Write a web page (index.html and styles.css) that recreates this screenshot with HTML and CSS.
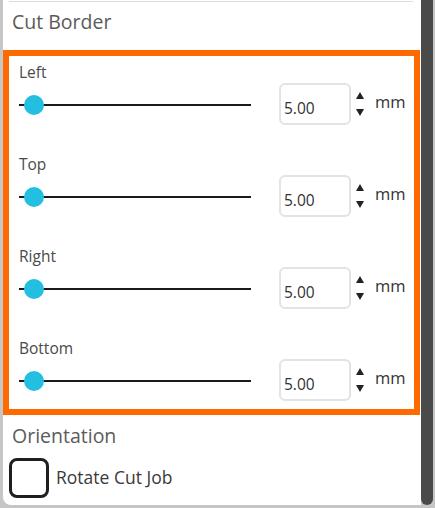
FILE: index.html
```html
<!DOCTYPE html>
<html>
<head>
<meta charset="utf-8">
<link rel="stylesheet" href="styles.css">
</head>
<body>
<div class="frame">
  <div class="panel">
    <div class="topline"></div>
    <div class="section-title">Cut Border</div>
    <div class="highlight">
      <div class="field">
        <div class="field-label">Left</div>
        <div class="controls">
          <div class="slider"><div class="track"></div><div class="thumb"></div></div>
          <div class="numbox">5.00</div>
          <div class="spin"><span class="up"></span><span class="down"></span></div>
          <div class="unit">mm</div>
        </div>
      </div>
      <div class="field">
        <div class="field-label">Top</div>
        <div class="controls">
          <div class="slider"><div class="track"></div><div class="thumb"></div></div>
          <div class="numbox">5.00</div>
          <div class="spin"><span class="up"></span><span class="down"></span></div>
          <div class="unit">mm</div>
        </div>
      </div>
      <div class="field">
        <div class="field-label">Right</div>
        <div class="controls">
          <div class="slider"><div class="track"></div><div class="thumb"></div></div>
          <div class="numbox">5.00</div>
          <div class="spin"><span class="up"></span><span class="down"></span></div>
          <div class="unit">mm</div>
        </div>
      </div>
      <div class="field">
        <div class="field-label">Bottom</div>
        <div class="controls">
          <div class="slider"><div class="track"></div><div class="thumb"></div></div>
          <div class="numbox">5.00</div>
          <div class="spin"><span class="up"></span><span class="down"></span></div>
          <div class="unit">mm</div>
        </div>
      </div>
    </div>
    <div class="section-title orient">Orientation</div>
    <div class="check-row">
      <div class="checkbox"></div>
      <div class="check-label">Rotate Cut Job</div>
    </div>
  </div>
  <div class="scrollbar"></div>
</div>
</body>
</html>
```

FILE: styles.css
```css
html, body {
  margin: 0;
  padding: 0;
  background: #c6c6c6;
  font-family: "Open Sans", "Noto Sans", sans-serif;
}
.frame {
  display: flex;
  width: 435px;
  height: 508px;
  padding-left: 3px;
  box-sizing: border-box;
}
.panel {
  width: 418px;
  height: 505px;
  background: #ffffff;
  border-bottom-left-radius: 8px;
  display: flex;
  flex-direction: column;
}
.topline {
  height: 1px;
  background: #dcdcdc;
  margin: 1px 8px 0 6px;
}
.section-title {
  font-size: 19.5px;
  line-height: 22px;
  color: #5b5b5b;
  padding-left: 9px;
  margin-top: 9px;
  height: 39px;
}
.highlight {
  width: 417px;
  box-sizing: border-box;
  border: 6px solid #ff6a00;
  padding: 6px 0 8px 10px;
}
.field {
  margin-bottom: 29px;
}
.field:last-child {
  margin-bottom: 0;
}
.field-label {
  font-size: 15.5px;
  line-height: 20px;
  color: #4a4a4a;
  height: 20px;
  margin-bottom: 1px;
}
.controls {
  display: flex;
  align-items: center;
  height: 42px;
}
.slider {
  position: relative;
  width: 232px;
  height: 20px;
  margin-top: 2px;
}
.track {
  position: absolute;
  left: 0;
  right: 0;
  top: 9px;
  height: 2px;
  background: #1a1a1a;
}
.thumb {
  position: absolute;
  left: 5px;
  top: 0;
  width: 20px;
  height: 20px;
  border-radius: 50%;
  background: #22bfe0;
}
.numbox {
  margin-left: 28px;
  width: 72px;
  height: 42px;
  box-sizing: border-box;
  border: 2px solid #e3e3e3;
  border-radius: 6px;
  font-size: 15.5px;
  color: #333;
  line-height: 38px;
  padding-left: 3px;
  padding-top: 4px;
}
.spin {
  display: flex;
  flex-direction: column;
  justify-content: center;
  gap: 10px;
  margin-left: 5px;
  width: 8px;
}
.up, .down {
  width: 0;
  height: 0;
  border-left: 4px solid transparent;
  border-right: 4px solid transparent;
}
.up {
  border-bottom: 7px solid #222;
}
.down {
  border-top: 7px solid #222;
}
.unit {
  margin-left: 11px;
  font-size: 16.5px;
  color: #333;
  margin-top: -5px;
}
.orient {
  margin-top: 10px;
  height: 22px;
}
.check-row {
  display: flex;
  align-items: center;
  margin-top: 11px;
  padding-left: 6px;
}
.checkbox {
  width: 40px;
  height: 40px;
  box-sizing: border-box;
  border: 3px solid #1f1f1f;
  border-radius: 8px;
}
.check-label {
  margin-left: 7px;
  font-size: 17.5px;
  color: #3a3a3a;
  margin-top: -3px;
}
.scrollbar {
  width: 12px;
  height: 505px;
  background: #4a4a4a;
  border-bottom-left-radius: 6px;
  border-bottom-right-radius: 6px;
}
```
